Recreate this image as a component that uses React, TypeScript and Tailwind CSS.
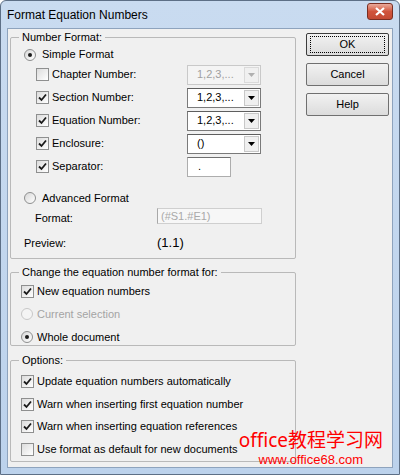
import React from "react";

const font = { fontFamily: '"Liberation Sans", Arial, sans-serif' };

function Check({ checked }: { checked: boolean }) {
  return (
    <span className="relative inline-flex h-[13px] w-[13px] shrink-0 items-center justify-center border border-[#8e8f8f] bg-gradient-to-br from-[#dcdcdc] to-[#ffffff]">
      {checked && (
        <svg width="9" height="9" viewBox="0 0 9 9" className="block">
          <path d="M1 4.5 L3.5 7 L8 1.5" fill="none" stroke="#1b1b1b" strokeWidth="1.8" />
        </svg>
      )}
    </span>
  );
}

function Radio({ checked, disabled }: { checked: boolean; disabled?: boolean }) {
  return (
    <span
      className={`relative inline-flex h-[12px] w-[12px] shrink-0 items-center justify-center rounded-full border ${
        disabled ? "border-[#c8c8c8] bg-[#f4f4f4]" : "border-[#8e8f8f] bg-gradient-to-br from-[#d8d8d8] to-[#ffffff]"
      }`}
    >
      {checked && <span className="block h-[4px] w-[4px] rounded-full bg-[#1b1b1b]" />}
    </span>
  );
}

function Combo({ value, disabled }: { value: string; disabled?: boolean }) {
  return (
    <div
      className={`flex h-[20px] w-[74px] items-center border ${
        disabled ? "border-[#c9c9c9] bg-[#f4f4f4]" : "border-[#7a7a7a] border-t-[#5e5e5e] bg-white"
      }`}
    >
      <span className={`flex-1 pl-[9px] text-[11px] ${disabled ? "text-[#a0a0a0]" : "text-black"}`}>{value}</span>
      <span
        className={`mr-[1px] flex h-[16px] w-[15px] items-center justify-center border ${
          disabled ? "border-[#dadada] bg-[#f0f0f0]" : "border-[#c8c8c8] bg-[#f0f0f0]"
        }`}
      >
        <svg width="7" height="4" viewBox="0 0 7 4">
          <path d="M0 0 H7 L3.5 4 Z" fill={disabled ? "#b0b0b0" : "#000"} />
        </svg>
      </span>
    </div>
  );
}

function Group({ label, className, children }: { label: string; className: string; children: React.ReactNode }) {
  return (
    <div className={`relative rounded-[2px] border border-[#b9b9b9] ${className}`}>
      <span className="absolute -top-[8px] left-[8px] bg-[#f0f0f0] px-[3px] text-[11px] leading-[14px] text-black">
        {label}
      </span>
      {children}
    </div>
  );
}

function Btn({ label, isDefault }: { label: string; isDefault?: boolean }) {
  return (
    <div
      className={`flex h-[23px] w-[83px] items-center justify-center rounded-[2px] border bg-gradient-to-b from-[#f2f2f2] to-[#dcdcdc] text-[11px] text-black ${
        isDefault ? "border-[#3c3c3c]" : "border-[#707070]"
      }`}
    >
      {isDefault ? (
        <span className="flex h-[17px] w-[75px] items-center justify-center border border-dotted border-black">{label}</span>
      ) : (
        label
      )}
    </div>
  );
}

export default function App() {
  return (
    <div style={font} className="relative flex h-[475px] w-[400px] flex-col overflow-hidden rounded-t-[6px] border border-[#5d6f86] bg-gradient-to-b from-[#c9dbf0] to-[#bcd2ec]">
      {/* Title bar */}
      <div className="flex h-[27px] shrink-0 items-center justify-between pl-[6px] pr-[6px]">
        <span className="text-[12px] text-black">Format Equation Numbers</span>
        <div className="mb-[6px] flex h-[17px] w-[26px] items-center justify-center rounded-[3px] border border-[#7a2e22] bg-gradient-to-b from-[#e9a99b] via-[#d0543c] to-[#c44a33]">
          <svg width="10" height="9" viewBox="0 0 10 9">
            <path d="M1 1 L9 8 M9 1 L1 8" stroke="white" strokeWidth="2.2" />
          </svg>
        </div>
      </div>
      {/* Body */}
      <div className="mx-[6px] mb-[6px] flex flex-1 border border-[#8ea3bd] bg-[#f0f0f0] text-[11px] text-black">
        {/* Left */}
        <div className="ml-[2px] flex w-[286px] flex-col">
          <Group label="Number Format:" className="mt-[8px] h-[222px]">
            <div className="flex flex-col pt-[8px]">
              <div className="flex h-[17px] items-center gap-[6px] pl-[13px]">
                <Radio checked />
                <span>Simple Format</span>
              </div>
              {[
                { l: "Chapter Number:", c: false, v: "1,2,3,...", d: true },
                { l: "Section Number:", c: true, v: "1,2,3,..." },
                { l: "Equation Number:", c: true, v: "1,2,3,..." },
                { l: "Enclosure:", c: true, v: "()" },
              ].map((r) => (
                <div key={r.l} className="flex h-[23px] items-center pl-[25px]">
                  <Check checked={r.c} />
                  <span className="ml-[2px] w-[136px] pl-[1px]">{r.l}</span>
                  <Combo value={r.v} disabled={r.d} />
                </div>
              ))}
              <div className="flex h-[23px] items-center pl-[25px]">
                <Check checked />
                <span className="ml-[2px] w-[136px] pl-[1px]">Separator:</span>
                <div className="flex h-[20px] w-[44px] items-center border border-[#adadad] border-t-[#6f6f6f] bg-white pl-[10px] text-[11px]">
                  .
                </div>
              </div>
              <div className="mt-[10px] flex h-[20px] items-center gap-[6px] pl-[13px]">
                <Radio checked={false} />
                <span>Advanced Format</span>
              </div>
              <div className="flex h-[16px] items-center pl-[24px]">
                <span className="mt-[4px] w-[122px]">Format:</span>
                <div className="flex h-[16px] w-[105px] items-center border border-[#cfcfcf] border-l-[#a8a8a8] bg-[#f7f7f7] pl-[3px] text-[11px] text-[#a9a9a9]">
                  (#S1.#E1)
                </div>
              </div>
              <div className="mt-[9px] flex h-[20px] items-center pl-[13px]">
                <span className="w-[133px]">Preview:</span>
                <span className="text-[13px]">(1.1)</span>
              </div>
            </div>
          </Group>

          <Group label="Change the equation number format for:" className="mt-[13px] h-[74px]">
            <div className="flex flex-col pt-[8px]">
              <div className="flex h-[20px] items-center gap-[3px] pl-[10px]">
                <Check checked />
                <span>New equation numbers</span>
              </div>
              <div className="mt-[3px] flex h-[20px] items-center gap-[4px] pl-[10px] text-[#a4a4a4]">
                <Radio checked={false} disabled />
                <span>Current selection</span>
              </div>
              <div className="mt-[3px] flex h-[20px] items-center gap-[4px] pl-[10px]">
                <Radio checked />
                <span>Whole document</span>
              </div>
            </div>
          </Group>

          <Group label="Options:" className="mt-[14px] h-[102px]">
            <div className="flex flex-col pt-[9px]">
              {[
                { l: "Update equation numbers automatically", c: true },
                { l: "Warn when inserting first equation number", c: true },
                { l: "Warn when inserting equation references", c: true },
                { l: "Use format as default for new documents", c: false },
              ].map((r) => (
                <div key={r.l} className="flex h-[22.7px] items-center gap-[3px] pl-[10px]">
                  <Check checked={r.c} />
                  <span>{r.l}</span>
                </div>
              ))}
            </div>
          </Group>
        </div>
        {/* Right buttons */}
        <div className="ml-[10px] flex flex-col gap-[7px] pt-[4px]">
          <Btn label="OK" isDefault />
          <Btn label="Cancel" />
          <Btn label="Help" />
        </div>
      </div>
      {/* Watermark */}
      <div className="absolute bottom-[6px] right-[16px] flex flex-col items-center text-[#ff0000]">
        <span className="text-[19px] leading-[24px]" style={{ fontFamily: '"Noto Sans", "Noto Sans CJK SC", sans-serif' }}>
          office教程学习网
        </span>
        <span className="text-[13px] leading-[16px]" style={{ fontFamily: '"Liberation Sans", Arial, sans-serif' }}>
          www.office68.com
        </span>
      </div>
    </div>
  );
}
